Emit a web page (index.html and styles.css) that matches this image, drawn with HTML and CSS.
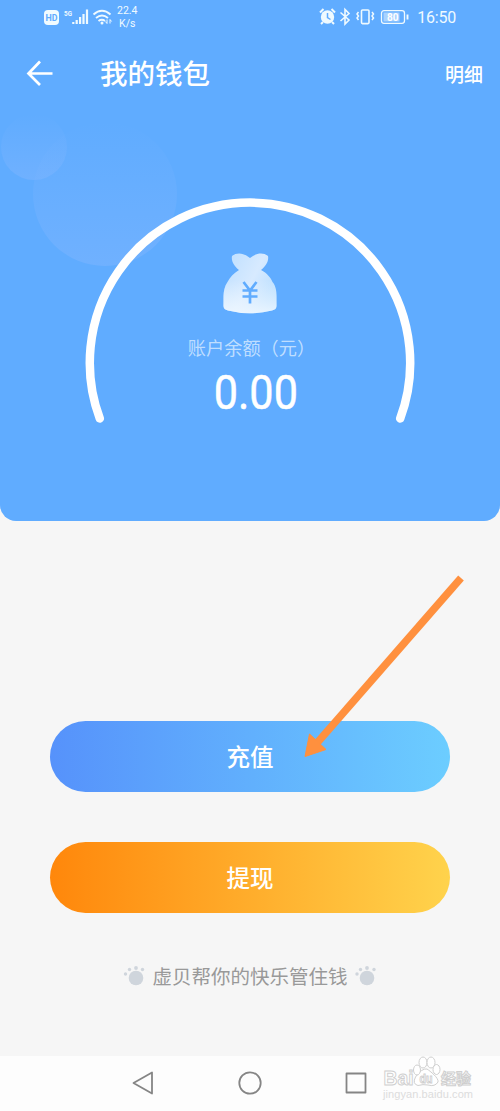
FILE: index.html
```html
<!DOCTYPE html>
<html lang="zh-CN">
<head>
<meta charset="utf-8">
<title>我的钱包</title>
<link rel="stylesheet" href="styles.css">
</head>
<body>
<div class="phone">
  <section class="hero">
    <svg class="bubbles" viewBox="0 0 250 300" aria-hidden="true">
      <defs>
        <linearGradient id="bubble" x1="0" y1="0" x2="0" y2="1">
          <stop offset="0" stop-color="#7ab4ff" stop-opacity="0"/>
          <stop offset="1" stop-color="#7ab4ff" stop-opacity=".6"/>
        </linearGradient>
      </defs>
      <circle cx="34" cy="147" r="33" fill="url(#bubble)"/>
      <circle cx="105" cy="194" r="72" fill="url(#bubble)"/>
    </svg>
    <div class="status">
      <div class="status-left">
        <svg class="signal" width="72" height="24" viewBox="0 0 72 24">
          <rect x="0" y="6" width="15" height="15" rx="4" fill="#f1fbff"/>
          <text x="1.500" y="17" class="hd" textLength="12" lengthAdjust="spacingAndGlyphs">HD</text>
          <text x="20" y="12" class="net" textLength="8" lengthAdjust="spacingAndGlyphs">5G</text>
          <path d="M29.300 20v-2M32.700 20v-4M36.100 20v-7M39.500 20v-10M43 20V5.500" stroke="#effaff" stroke-width="2.200"/>
          <path d="M49.500 10.500Q58 3 66.500 10.500M52 14Q58 9 64 14M54.500 17Q58 14.500 61 17" fill="none" stroke="#effaff" stroke-width="1.900"/>
          <circle cx="58" cy="19" r="1.500" fill="#effaff"/>
          <path d="M63 15.500v4l-1.600-2M66 19.500v-4l1.600 2" fill="none" stroke="#effaff" stroke-width="1"/>
        </svg>
        <div class="speed"><span>22.4</span><span>K/s</span></div>
      </div>
      <div class="status-right">
        <svg width="92" height="20" viewBox="0 0 92 20">
          <circle cx="8.500" cy="10" r="6.700" fill="#effaff"/>
          <path d="M1 5.500l3.500-3.500M16 5.500l-3.500-3.500M4 15l-2 2M13 15l2 2" stroke="#effaff" stroke-width="2"/>
          <path d="M8.500 6V10.500l3 2" fill="none" stroke="#60acff" stroke-width="1.500"/>
          <path d="M21.500 5.500l8.500 7.500-4 4V2.500l4 4-8.500 7.500" fill="none" stroke="#effaff" stroke-width="1.600"/>
          <rect x="42.500" y="3" width="7.500" height="13.600" rx="1" fill="none" stroke="#effaff" stroke-width="1.600"/>
          <path d="M39.500 5L38 7l1.500 2L38 11l1.500 2M53 5l1.500 2L53 9l1.500 2-1.500 2" fill="none" stroke="#effaff" stroke-width="1.500"/>
          <rect x="62.500" y="3.700" width="23" height="12.600" rx="2.500" fill="none" stroke="#effaff" stroke-width="1.300"/>
          <rect x="64.500" y="5.500" width="16" height="9" fill="#a8d2ff"/>
          <path d="M88.500 7.500v5" stroke="#effaff" stroke-width="1.900"/>
          <text x="68" y="13.800" class="battery">80</text>
        </svg>
        <time>16:50</time>
      </div>
    </div>
    <header class="topbar">
      <svg class="back" width="28" height="28" viewBox="0 0 28 28">
        <path d="M15 2.500L3.500 14.500l11.500 11.500M3.500 14.500h24" fill="none" stroke="#fff" stroke-width="2.700"/>
      </svg>
      <h1>我的钱包</h1>
      <a class="detail">明细</a>
    </header>
    <div class="gauge">
      <svg class="arc" viewBox="0 0 330 232">
        <path d="M14.800 221.500A160.200 160.200 0 1 1 315.200 221.500" fill="none" stroke="#fff" stroke-width="8.500" stroke-linecap="round"/>
      </svg>
      <svg class="bag" width="54" height="62" viewBox="0 0 54 62">
        <defs>
          <linearGradient id="bag" x1="0" y1=".2" x2="1" y2=".8">
            <stop stop-color="#c0e0ff"/>
            <stop offset=".5" stop-color="#d7eaff"/>
            <stop offset="1" stop-color="#b4dcff"/>
          </linearGradient>
          <linearGradient id="base" x1="0" y1="0" x2="0" y2="1">
            <stop offset=".45" stop-color="#eef7ff" stop-opacity="0"/>
            <stop offset="1" stop-color="#eef7ff" stop-opacity=".9"/>
          </linearGradient>
          <path id="pouch" d="M16 16C11 12 8 7 9 2C14-2 21-1 27 4C33-1 40-2 45 2C46 7 43 12 38 16C44 19 48 24 49.500 28C53 32 53.500 38 53.500 42V52Q53.500 55.500 49 56.500Q27 62 5 56.500Q.5 55.500 .5 52V42C.5 38 1.500 32 4.500 28C7 23 11 19 16 16Z"/>
        </defs>
        <use href="#pouch" fill="url(#bag)"/>
        <use href="#pouch" fill="url(#base)"/>
        <path d="M20.500 28L27 36.500L33.500 28M27 36.500V49.500M19.500 36.500H34.500M19.500 42.500H34.500" fill="none" stroke="#60acff" stroke-width="2.700"/>
      </svg>
      <p class="label">账户余额（元）</p>
      <p class="amount">0.00</p>
    </div>
  </section>
  <main class="actions">
    <button class="btn recharge">充值</button>
    <button class="btn withdraw">提现</button>
    <p class="slogan">
      <svg class="paw" width="22" height="20" viewBox="0 0 22 20"><circle cx="13" cy="12" r="7.300"/><circle cx="2.500" cy="8" r="1.700"/><circle cx="6.500" cy="3.500" r="1.700"/><circle cx="13" cy="2" r="1.900"/><circle cx="19.500" cy="3.500" r="1.700"/></svg>
      <span>虚贝帮你的快乐管住钱</span>
      <svg class="paw" width="22" height="20" viewBox="0 0 22 20"><circle cx="12" cy="12" r="7.300"/><circle cx="2" cy="8" r="1.700"/><circle cx="5.500" cy="3.500" r="1.700"/><circle cx="12" cy="2" r="1.900"/><circle cx="19" cy="3.500" r="1.700"/></svg>
    </p>
  </main>
  <nav class="navbar">
    <svg width="22" height="24" viewBox="0 0 22 24"><path d="M20 1.500V22.500L1.500 12Z"/></svg>
    <svg width="24" height="24" viewBox="0 0 24 24"><circle cx="12" cy="12" r="10.700"/></svg>
    <svg width="22" height="22" viewBox="0 0 22 22"><rect x="1.500" y="1.500" width="19" height="19"/></svg>
  </nav>
  <svg class="pointer" width="162" height="186" viewBox="0 0 162 186" aria-hidden="true">
    <path d="M158 6L14 171" stroke="#ff903e" stroke-width="7.500"/>
    <path d="M2 184.500L6.500 162L23 177.500Z" fill="#ff903e" stroke="#ff903e" stroke-linejoin="round"/>
  </svg>
  <svg class="watermark" width="100" height="50" viewBox="0 0 100 50">
    <g class="mark">
      <text x="2.500" y="33" class="brand" textLength="30" lengthAdjust="spacingAndGlyphs">Bai</text>
      <path d="M37 33.500Q31 32 34.500 25Q41 16 46 17C49 19 58 26 57 30Q54 35 47 33Q42 32 37 33.500Z"/>
      <ellipse cx="36" cy="18" rx="3.500" ry="5"/><ellipse cx="42" cy="10.500" rx="4" ry="5.500"/><ellipse cx="50" cy="10.500" rx="4" ry="5.500"/><ellipse cx="55.500" cy="17.500" rx="3.500" ry="5"/>
      <text x="38.500" y="31" class="du" textLength="13" lengthAdjust="spacingAndGlyphs">du</text>
      <text x="60" y="31.500" class="exp" textLength="30" lengthAdjust="spacingAndGlyphs">经验</text>
    </g>
    <text x="2" y="45.500" class="site" textLength="90">jingyan.baidu.com</text>
  </svg>
</div>
</body>
</html>
```
FILE: styles.css
```css
* { box-sizing: border-box; }
body { margin: 0; font-family: "Liberation Sans", "Noto Sans CJK SC", sans-serif; }
h1, p { margin: 0; }
svg { display: block; flex: none; }
.phone { position: relative; display: flex; flex-direction: column; width: 500px; height: 1111px; overflow: hidden; background: #f6f6f6; }
.hero { position: relative; height: 521px; flex: none; overflow: hidden; background: #60acff; border-radius: 0 0 16px 16px; }
.bubbles { position: absolute; left: 0; top: 0; width: 250px; height: 300px; }
.status { position: relative; display: flex; justify-content: space-between; height: 34px; padding: 5px 44px 0 44px; color: #effaff; }
.status-left { display: flex; gap: 1px; }
.signal { margin-top: -1px; }
.hd { font: bold 9px Roboto, sans-serif; fill: #60acff; }
.net { font: bold 8px Roboto, sans-serif; fill: #effaff; }
.speed { display: flex; flex-direction: column; align-items: center; font: 10.500px/12.500px Roboto, sans-serif; }
.status-right { display: flex; gap: 6px; padding-top: 2px; }
.battery { font: bold 10px Roboto, sans-serif; fill: #fff; }
time { font: 16px/21px Roboto, sans-serif; letter-spacing: -.2px; }
.topbar { position: relative; display: flex; align-items: center; height: 78px; padding: 0 17px 0 25px; color: #fff; }
.topbar h1 { flex: 1; margin: 3px 0 0 47px; font-size: 27.500px; font-weight: 500; line-height: 40px; }
.detail { font-size: 19px; font-weight: 500; }
.gauge { position: relative; display: flex; flex-direction: column; align-items: center; width: 330px; height: 232px; margin: 85px auto 0; padding-top: 57px; }
.arc { position: absolute; left: 0; top: 0; width: 330px; height: 232px; }
.bag { overflow: visible; }
.label { margin: 20px 0 0 3px; font-size: 18.200px; line-height: 26px; color: #bfdeff; }
.amount { margin: 5px 0 0 11px; font: 48px/52px Roboto, sans-serif; color: #fff; transform: scaleX(.9); -webkit-text-stroke: .5px #fff; }
.actions { flex: 1; display: flex; flex-direction: column; align-items: center; gap: 50px; padding-top: 200px; }
.btn { width: 400px; height: 71px; border: 0; border-radius: 36px; padding: 0; color: #fff; font: 500 23.500px/71px "Noto Sans CJK SC", sans-serif; }
.recharge { background: linear-gradient(90deg, #5692fb, #6ccdff); }
.withdraw { background: linear-gradient(90deg, #ff870b, #ffd34c); }
.slogan { display: flex; align-items: center; gap: 7px; margin-top: -1px; font-size: 19.500px; line-height: 30px; color: #999; }
.paw { margin-top: -3px; fill: #cfd5dc; }
.navbar { display: flex; align-items: center; justify-content: space-between; height: 55px; padding: 0 133px 1px 132px; background: #fdfdfd; }
.navbar svg { fill: none; stroke: #858585; stroke-width: 1.800; stroke-linejoin: round; }
.pointer { position: absolute; left: 303px; top: 572px; }
.watermark { position: absolute; left: 381px; top: 1052px; }
.mark { fill: #fff; stroke: #cfcfcf; stroke-width: 1; }
.brand { font: bold 21px "Liberation Sans", sans-serif; }
.du { font: bold 13px "Liberation Sans", sans-serif; }
.exp { font: bold 15px "Noto Sans CJK SC", sans-serif; }
.site { font: 11px "Liberation Sans", sans-serif; fill: #dcdcdc; }
```
